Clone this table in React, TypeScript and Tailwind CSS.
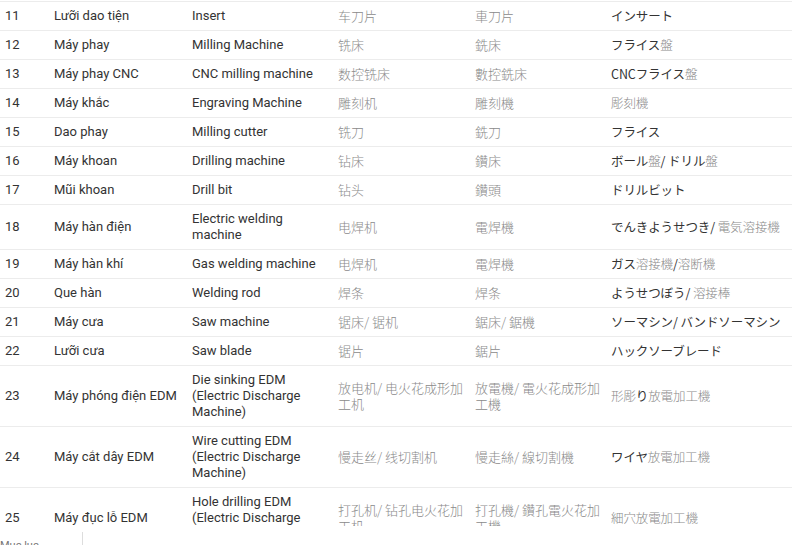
const rows: [string, string, string, string, string, string][] = [
  ["11", "Lưỡi dao tiện", "Insert", "车刀片", "車刀片", "インサート"],
  ["12", "Máy phay", "Milling Machine", "铣床", "銑床", "フライス盤"],
  ["13", "Máy phay CNC", "CNC milling machine", "数控铣床", "數控銑床", "CNCフライス盤"],
  ["14", "Máy khắc", "Engraving Machine", "雕刻机", "雕刻機", "彫刻機"],
  ["15", "Dao phay", "Milling cutter", "铣刀", "銑刀", "フライス"],
  ["16", "Máy khoan", "Drilling machine", "钻床", "鑽床", "ボール盤/ ドリル盤"],
  ["17", "Mũi khoan", "Drill bit", "钻头", "鑽頭", "ドリルビット"],
  ["18", "Máy hàn điện", "Electric welding machine", "电焊机", "電焊機", "でんきようせつき/ 電気溶接機"],
  ["19", "Máy hàn khí", "Gas welding machine", "电焊机", "電焊機", "ガス溶接機/溶断機"],
  ["20", "Que hàn", "Welding rod", "焊条", "焊条", "ようせつぼう/ 溶接棒"],
  ["21", "Máy cưa", "Saw machine", "锯床/ 锯机", "鋸床/ 鋸機", "ソーマシン/ バンドソーマシン"],
  ["22", "Lưỡi cưa", "Saw blade", "锯片", "鋸片", "ハックソーブレード"],
  ["23", "Máy phóng điện EDM", "Die sinking EDM (Electric Discharge Machine)", "放电机/ 电火花成形加工机", "放電機/ 電火花成形加工機", "形彫り放電加工機"],
  ["24", "Máy cắt dây EDM", "Wire cutting EDM (Electric Discharge Machine)", "慢走丝/ 线切割机", "慢走絲/ 線切割機", "ワイヤ放電加工機"],
  ["25", "Máy đục lỗ EDM", "Hole drilling EDM (Electric Discharge Machine)", "打孔机/ 钻孔电火花加工机", "打孔機/ 鑽孔電火花加工機", "細穴放電加工機"],
];

const latin = { fontFamily: "Roboto, 'Noto Sans CJK JP', sans-serif" };
const cjk = { fontFamily: "'Noto Sans CJK SC', sans-serif" };
const jp = { fontFamily: "'Noto Sans CJK JP', sans-serif" };

// kanji in the japanese column render lighter than the kana
function Japanese({ text }: { text: string }) {
  const parts = text.split(/([\u4e00-\u9fff]+)/);
  return (
    <>
      {parts.map((p, i) =>
        /[\u4e00-\u9fff]/.test(p) ? (
          <span key={i} className="text-[#8a8a8a] font-light">
            {p}
          </span>
        ) : (
          <span key={i}>{p}</span>
        )
      )}
    </>
  );
}

export default function App() {
  return (
    <div className="w-[800px] h-[545px] overflow-hidden bg-white" style={latin}>
      <div className="h-[526px] overflow-hidden pt-[1px]">
        <table className="w-[792px] table-fixed border-collapse text-[13px] leading-4 text-[#333]">
          <colgroup>
            <col className="w-[49px]" />
            <col className="w-[138px]" />
            <col className="w-[146px]" />
            <col className="w-[137px]" />
            <col className="w-[136px]" />
            <col className="w-[186px]" />
          </colgroup>
          <tbody>
            {rows.map((r) => (
              <tr key={r[0]} className="border-t border-[#ececec]">
                <td className="pl-[5px] pr-1 py-1.5 align-middle">{r[0]}</td>
                <td className="px-[5px] py-1.5 align-middle">{r[1]}</td>
                <td className="px-[5px] py-1.5 align-middle">{r[2]}</td>
                <td className="px-[5px] py-1.5 align-middle text-[#8a8a8a] font-light" style={cjk}>
                  {r[3]}
                </td>
                <td className="px-[5px] py-1.5 align-middle text-[#8a8a8a] font-light" style={cjk}>
                  {r[4]}
                </td>
                <td className="pl-[5px] pr-0 py-1.5 align-middle text-[12.5px] tracking-[-0.1px] whitespace-nowrap text-[#333]" style={jp}>
                  <Japanese text={r[5]} />
                </td>
              </tr>
            ))}
          </tbody>
        </table>
      </div>
      <div className="flex h-[19px] items-start pt-[6px]">
        <div className="w-[82px] h-[13px] overflow-hidden">
          <span className="block pt-[8px] text-[11px] leading-[11px] text-[#777]">Mục lục</span>
        </div>
        <div className="h-[13px] border-l border-[#ddd]" />
      </div>
    </div>
  );
}
